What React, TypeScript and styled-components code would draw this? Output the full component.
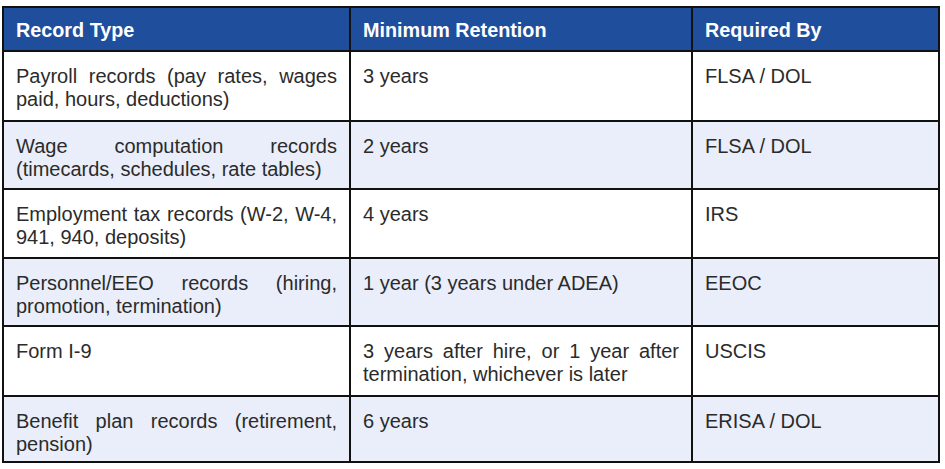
import React from "react";
import styled, { createGlobalStyle } from "styled-components";

const GlobalStyle = createGlobalStyle`
  html, body {
    margin: 0;
    padding: 0;
    background: #ffffff;
  }
  body {
    font-family: "Liberation Sans", Arial, sans-serif;
  }
`;

const Page = styled.div`
  padding: 6px 5px 6px 2px;
`;

const Table = styled.div`
  display: grid;
  width: 938px;
  box-sizing: border-box;
  grid-template-columns: 345px 340px 245px;
  grid-template-rows: 42px 68px 66px 67px 66px 68px 64px;
  gap: 2px;
  padding: 2px;
  background: #111111;
`;

const HeadCell = styled.div`
  background: #1f4e9c;
  color: #ffffff;
  font-weight: 700;
  font-size: 19.8px;
  line-height: 23px;
  padding: 11px 12px 0;
`;

const Cell = styled.div<{ $alt: boolean }>`
  background: ${(p) => (p.$alt ? "#e9eefa" : "#ffffff")};
  color: #2b2b2b;
  font-size: 20px;
  line-height: 23px;
  padding: 12.5px 12px 0;
  text-align: justify;
`;

const headers = ["Record Type", "Minimum Retention", "Required By"];

const rows: [string, string, string][] = [
  ["Payroll records (pay rates, wages paid, hours, deductions)", "3 years", "FLSA / DOL"],
  ["Wage computation records (timecards, schedules, rate tables)", "2 years", "FLSA / DOL"],
  ["Employment tax records (W-2, W-4, 941, 940, deposits)", "4 years", "IRS"],
  ["Personnel/EEO records (hiring, promotion, termination)", "1 year (3 years under ADEA)", "EEOC"],
  ["Form I-9", "3 years after hire, or 1 year after termination, whichever is later", "USCIS"],
  ["Benefit plan records (retirement, pension)", "6 years", "ERISA / DOL"],
];

export default function App() {
  return (
    <>
      <GlobalStyle />
      <Page>
        <Table role="table">
          {headers.map((h) => (
            <HeadCell key={h} role="columnheader">
              {h}
            </HeadCell>
          ))}
          {rows.map((r, i) =>
            r.map((c, j) => (
              <Cell key={`${i}-${j}`} $alt={i % 2 === 1} role="cell">
                {c}
              </Cell>
            ))
          )}
        </Table>
      </Page>
    </>
  );
}
